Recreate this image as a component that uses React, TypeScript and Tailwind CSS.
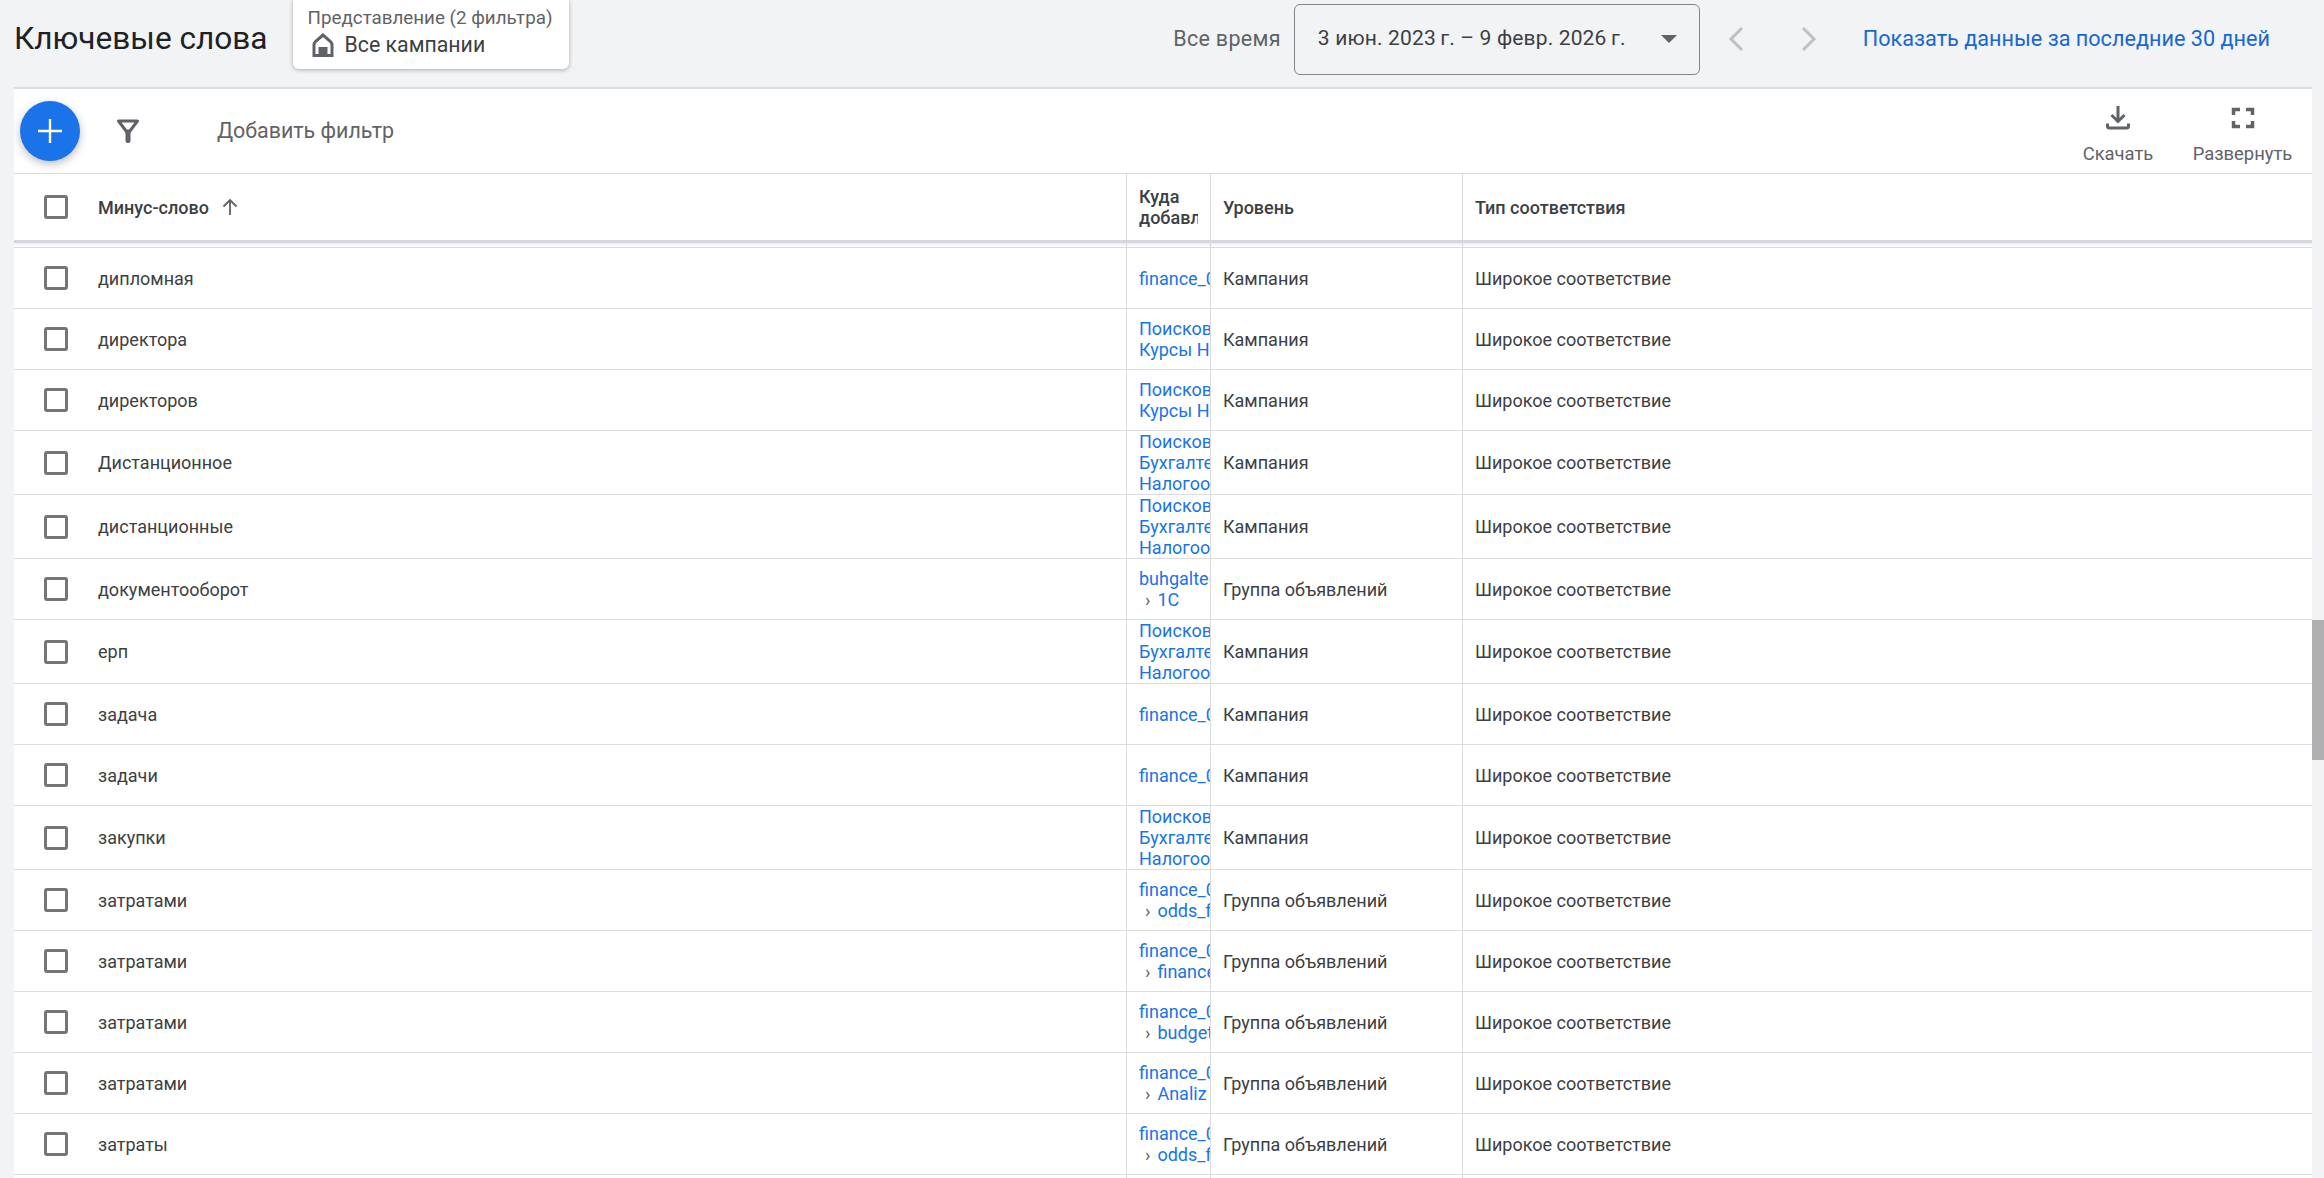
const rows: { word: string; links: string[]; sub?: string; level: string; tall?: boolean }[] = [
  { word: "дипломная", links: ["finance_0125"], level: "Кампания" },
  { word: "директора", links: ["Поисковая", "Курсы Налоги"], level: "Кампания" },
  { word: "директоров", links: ["Поисковая", "Курсы Налоги"], level: "Кампания" },
  { word: "Дистанционное", links: ["Поисковая", "Бухгалтерия", "Налогообложение"], level: "Кампания", tall: true },
  { word: "дистанционные", links: ["Поисковая", "Бухгалтерия", "Налогообложение"], level: "Кампания", tall: true },
  { word: "документооборот", links: ["buhgalteria"], sub: "1C", level: "Группа объявлений" },
  { word: "ерп", links: ["Поисковая", "Бухгалтерия", "Налогообложение"], level: "Кампания", tall: true },
  { word: "задача", links: ["finance_0125"], level: "Кампания" },
  { word: "задачи", links: ["finance_0125"], level: "Кампания" },
  { word: "закупки", links: ["Поисковая", "Бухгалтерия", "Налогообложение"], level: "Кампания", tall: true },
  { word: "затратами", links: ["finance_0125"], sub: "odds_finance", level: "Группа объявлений" },
  { word: "затратами", links: ["finance_0125"], sub: "finance", level: "Группа объявлений" },
  { word: "затратами", links: ["finance_0125"], sub: "budget", level: "Группа объявлений" },
  { word: "затратами", links: ["finance_0125"], sub: "Analiz", level: "Группа объявлений" },
  { word: "затраты", links: ["finance_0125"], sub: "odds_finance", level: "Группа объявлений" },
  { word: "затраты", links: ["finance_0125"], sub: "budget", level: "Группа объявлений" },
];

const Check = () => (
  <input type="checkbox" className="mr-[30px] ml-[30px] h-[24px] w-[24px] shrink-0 appearance-none rounded-[3px] border-[3px] border-[#757575] bg-white" />
);

export default function App() {
  return (
    <div className="flex h-[1178px] w-[2324px] overflow-hidden bg-[#f1f3f4] font-['Roboto',sans-serif] text-[#3c4043]">
      <div className="flex min-w-0 flex-1 flex-col">
        {/* top bar */}
        <div className="flex h-[87px] shrink-0 items-start">
          <h1 className="mt-[18px] ml-[14px] text-[31.6px] leading-[42px] font-normal text-[#202124]">Ключевые слова</h1>
          <div className="relative z-10 ml-[25px] h-[69px] w-[276px] rounded-b-[6px] bg-white pl-[15px] shadow-[0_1px_4px_rgba(60,64,67,0.4)]">
            <div className="pt-[6px] text-[18.8px] leading-[24px] text-[#5f6368]">Представление (2 фильтра)</div>
            <div className="flex items-center text-[21.3px] leading-[30px]">
              <svg width="24" height="26" viewBox="0 0 24 26" className="mr-[10px] ml-[3px] text-[#5f6368]">
                <path d="M12 3 4.5 9.5Q3 11 3 13v10.5h18V13q0-2-1.5-3.5L12 3z" fill="none" stroke="currentColor" strokeWidth="3" />
                <path d="M7.5 15h9v9h-9z" fill="currentColor" />
              </svg>
              Все кампании
            </div>
          </div>
          <div className="ml-auto flex h-[78px] items-center pr-[42px]">
            <span className="mr-[13px] text-[21.5px] tracking-[0.3px] text-[#5f6368]">Все время</span>
            <div className="flex h-[71px] w-[406px] items-center justify-between rounded-[6px] border-[1.5px] border-[#80868b] pr-[22px] pl-[23px] text-[21px] tracking-[0.15px]">
              3 июн. 2023{"\u2009"}г. – 9 февр. 2026{"\u2009"}г.
              <span className="h-0 w-0 border-x-[8px] border-t-[8px] border-x-transparent border-t-[#5f6368]" />
            </div>
            <svg width="16" height="26" viewBox="0 0 16 26" className="ml-[28px] text-[#bdc1c6]">
              <path d="M14 2 3 13l11 11" fill="none" stroke="currentColor" strokeWidth="3" />
            </svg>
            <svg width="16" height="26" viewBox="0 0 16 26" className="ml-[57px] text-[#bdc1c6]">
              <path d="m2 2 11 11L2 24" fill="none" stroke="currentColor" strokeWidth="3" />
            </svg>
            <span className="ml-[46px] text-[21.65px] font-[450] whitespace-nowrap text-[#1967d2]">Показать данные за последние 30 дней</span>
          </div>
        </div>

        {/* panel */}
        <div className="ml-[14px] flex min-h-0 flex-1 flex-col overflow-hidden border-t-2 border-[#dadce0] bg-white">
          <div className="flex h-[85px] shrink-0 items-center border-b border-[#dadce0]">
            <button className="relative z-10 ml-[6px] flex h-[60px] w-[60px] items-center justify-center rounded-full bg-[#1a73e8] shadow-[0_3px_8px_rgba(60,64,67,0.35)]">
              <svg width="26" height="26" viewBox="0 0 26 26">
                <path d="M13 1v24M1 13h24" stroke="#fff" strokeWidth="2.4" />
              </svg>
            </button>
            <svg width="24" height="24" viewBox="0 0 24 24" className="ml-[36px] text-[#5f6368]">
              <path d="M2.5 2h19L12 14.5z" fill="none" stroke="currentColor" strokeWidth="3" strokeLinejoin="round" />
              <path d="M12 13v8.5" fill="none" stroke="currentColor" strokeWidth="5" strokeLinecap="round" />
            </svg>
            <span className="ml-[77px] text-[21.4px] text-[#5f6368]">Добавить фильтр</span>
            <div className="ml-auto flex h-full items-start text-[18.4px] text-[#5f6368]">
              <div className="flex w-[146px] flex-col items-center pt-[15px]">
                <svg width="28" height="28" viewBox="0 0 28 28">
                  <path d="M14 2v15M7.5 11l6.5 6.5 6.5-6.5" fill="none" stroke="currentColor" strokeWidth="3" />
                  <path d="M3.5 19.5v2.5a2 2 0 0 0 2 2h17a2 2 0 0 0 2-2v-2.500" fill="none" stroke="currentColor" strokeWidth="3" />
                </svg>
                <span className="mt-[10px] leading-[24px]">Скачать</span>
              </div>
              <div className="mr-[18px] flex w-[103px] flex-col items-center pt-[15px]">
                <svg width="28" height="28" viewBox="0 0 28 28">
                  <path d="M4.500 11V5.500H11M17 5.500h6.500V11M23.500 17v5.500H17M11 22.500H4.500V17" fill="none" stroke="currentColor" strokeWidth="3.500" />
                </svg>
                <span className="mt-[10px] leading-[24px]">Развернуть</span>
              </div>
            </div>
          </div>

          {/* table header */}
          <div className="flex h-[69px] shrink-0 border-b-[3px] border-[#d5d7da] text-[18px] leading-[21px] font-medium">
            <div className="flex w-[1112px] shrink-0 items-center">
              <Check />
              Минус-слово
              <svg width="18" height="18" viewBox="0 0 18 18" className="ml-[12px] text-[#5f6368]">
                <path d="M9 17V2M2.5 8.500 9 2l6.500 6.500" fill="none" stroke="currentColor" strokeWidth="1.800" />
              </svg>
            </div>
            <div className="flex w-[84px] shrink-0 flex-col justify-center overflow-hidden border-l border-[#dadce0] pr-[12px] pl-[12px]">
              <span>Куда</span>
              <span className="overflow-hidden whitespace-nowrap">добавлено</span>
            </div>
            <div className="flex w-[252px] shrink-0 items-center border-l border-[#dadce0] pl-[12px]">Уровень</div>
            <div className="flex flex-1 items-center border-l border-[#dadce0] pl-[12px]">Тип соответствия</div>
          </div>

          {/* gap under the sticky header */}
          <div className="flex h-[5px] shrink-0 border-b border-[#dadce0] bg-gradient-to-b from-[#eceef0] to-white">
            <div className="w-[1112px]" />
            <div className="w-[84px] border-l border-[#dadce0]" />
            <div className="w-[252px] border-l border-[#dadce0]" />
            <div className="flex-1 border-l border-[#dadce0]" />
          </div>

          {/* rows */}
          {rows.map((r, i) => (
            <div key={i} className={`flex shrink-0 border-b border-[#dadce0] text-[18px] leading-[21px] ${r.tall ? "h-[64px]" : "h-[61px]"}`}>
              <div className="flex w-[1112px] shrink-0 items-center">
                <Check />
                {r.word}
              </div>
              <div className="flex w-[84px] shrink-0 flex-col justify-center overflow-hidden border-l border-[#dadce0] pl-[12px] whitespace-nowrap text-[#1a73e8]">
                {r.links.map((l, j) => (
                  <span key={j}>{l}</span>
                ))}
                {r.sub && (
                  <span>
                    <span className="mr-[7px] ml-[6px] text-[#5f6368]">›</span>
                    {r.sub}
                  </span>
                )}
              </div>
              <div className="flex w-[252px] shrink-0 items-center border-l border-[#dadce0] pl-[12px]">{r.level}</div>
              <div className="flex flex-1 items-center border-l border-[#dadce0] pl-[12px]">Широкое соответствие</div>
            </div>
          ))}
        </div>
      </div>

      {/* scrollbar */}
      <div className="w-[12px] shrink-0">
        <div className="mt-[620px] h-[140px] bg-[#b0b0b2]" />
      </div>
    </div>
  );
}
